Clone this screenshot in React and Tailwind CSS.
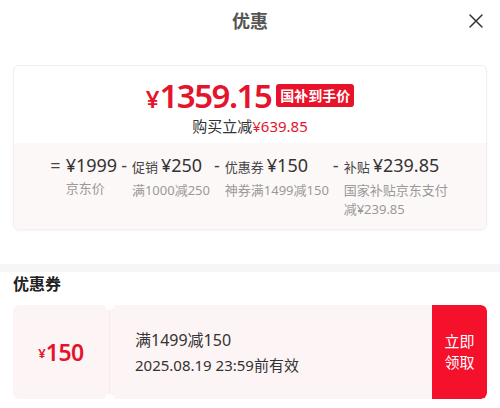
import React from 'react';

const font = { fontFamily: '"Noto Sans", "Noto Sans CJK SC", sans-serif' };

const parts = [
  { op: '=', label: '', amount: '¥1999', note: '京东价', w: '' },
  { op: '-', label: '促销', amount: '¥250', note: '满1000减250', w: '' },
  { op: '-', label: '优惠券', amount: '¥150', note: '神券满1499减150', w: '' },
  { op: '-', label: '补贴', amount: '¥239.85', note: '国家补贴京东支付减¥239.85', w: 'w-[106px]' },
];

export default function App() {
  return (
    <div className="w-[500px] h-[408px] bg-white overflow-hidden" style={font}>
      {/* Header */}
      <div className="relative h-[42px] flex items-center justify-center">
        <h2 className="text-[18px] font-bold text-[#555]">优惠</h2>
        <button className="absolute right-[16px] top-[13px] text-[#333]">
          <svg width="16" height="16" viewBox="0 0 16 16" fill="none" stroke="currentColor" strokeWidth="1.5" strokeLinecap="round">
            <path d="M2 2l12 12M14 2L2 14" />
          </svg>
        </button>
      </div>

      {/* Price card */}
      <div className="px-[13px] pt-[23px]">
        <div className="rounded-md border border-[#f6eded] overflow-hidden shadow-[0_1px_2px_rgba(0,0,0,0.04)]">
          <div className="h-[77px] flex flex-col items-center pt-[12px]">
            <div className="flex items-center gap-[5px] h-[34px]">
              <span className="text-[#e4142c] font-semibold leading-none flex items-baseline">
                <span className="text-[24px]">¥</span>
                <span className="text-[33px] tracking-[-1.5px]">1359.15</span>
              </span>
              <span className="bg-[#e8132b] text-white text-[14px] font-bold leading-[23px] px-[4px] rounded-[3px]">国补到手价</span>
            </div>
            <div className="text-[15px] text-[#333] mt-[4px] leading-[21px]">
              购买立减<span className="text-[#e4142c]">¥639.85</span>
            </div>
          </div>
          <div className="bg-[#fdf8f8] h-[86px] flex justify-center gap-[4px] pt-[10px]">
            {parts.map((p, i) => (
              <div key={i} className="flex gap-[5px]">
                <span className="text-[18px] text-[#444] leading-[24px]">{p.op}</span>
                <div className={`flex flex-col ${p.w}`}>
                  <div className="flex items-baseline gap-[3px] leading-[24px] whitespace-nowrap">
                    {p.label && <span className="text-[13px] text-[#444]">{p.label}</span>}
                    <span className="text-[18px] text-[#333]">{p.amount}</span>
                  </div>
                  <span className="text-[13px] text-[#999] leading-[19px] mt-[2px]">{p.note}</span>
                </div>
              </div>
            ))}
          </div>
        </div>
      </div>

      {/* Divider band */}
      <div className="h-[8px] bg-[#f6f6f9] mt-[34px]"></div>

      {/* Coupons */}
      <div className="px-[13px]">
        <h3 className="text-[16px] font-bold text-[#222] leading-[25px]">优惠券</h3>
        <div className="mt-[8px] h-[94px] flex rounded-md overflow-hidden bg-[#fdf4f5]">
          <div className="w-[96px] flex items-center justify-center text-[#e4142c] font-semibold">
            <span className="text-[13px] mt-[4px]">¥</span>
            <span className="text-[23px] tracking-[-0.5px]">150</span>
          </div>
          <div className="relative w-px bg-[#f8e9eb]">
            <span className="absolute -top-[4px] -left-[4px] w-[9px] h-[9px] rounded-full bg-white"></span>
            <span className="absolute -bottom-[4px] -left-[4px] w-[9px] h-[9px] rounded-full bg-white"></span>
          </div>
          <div className="flex-1 flex flex-col justify-center pl-[25px] text-[#333]">
            <div className="text-[16px] leading-[24px]">满1499减150</div>
            <div className="text-[15px] leading-[24px] mt-[1px]">2025.08.19 23:59前有效</div>
          </div>
          <button className="w-[55px] bg-[#f5102c] text-white text-[15px] leading-[21px] rounded-r-md flex items-center justify-center">
            立即<br />领取
          </button>
        </div>
      </div>
    </div>
  );
}
